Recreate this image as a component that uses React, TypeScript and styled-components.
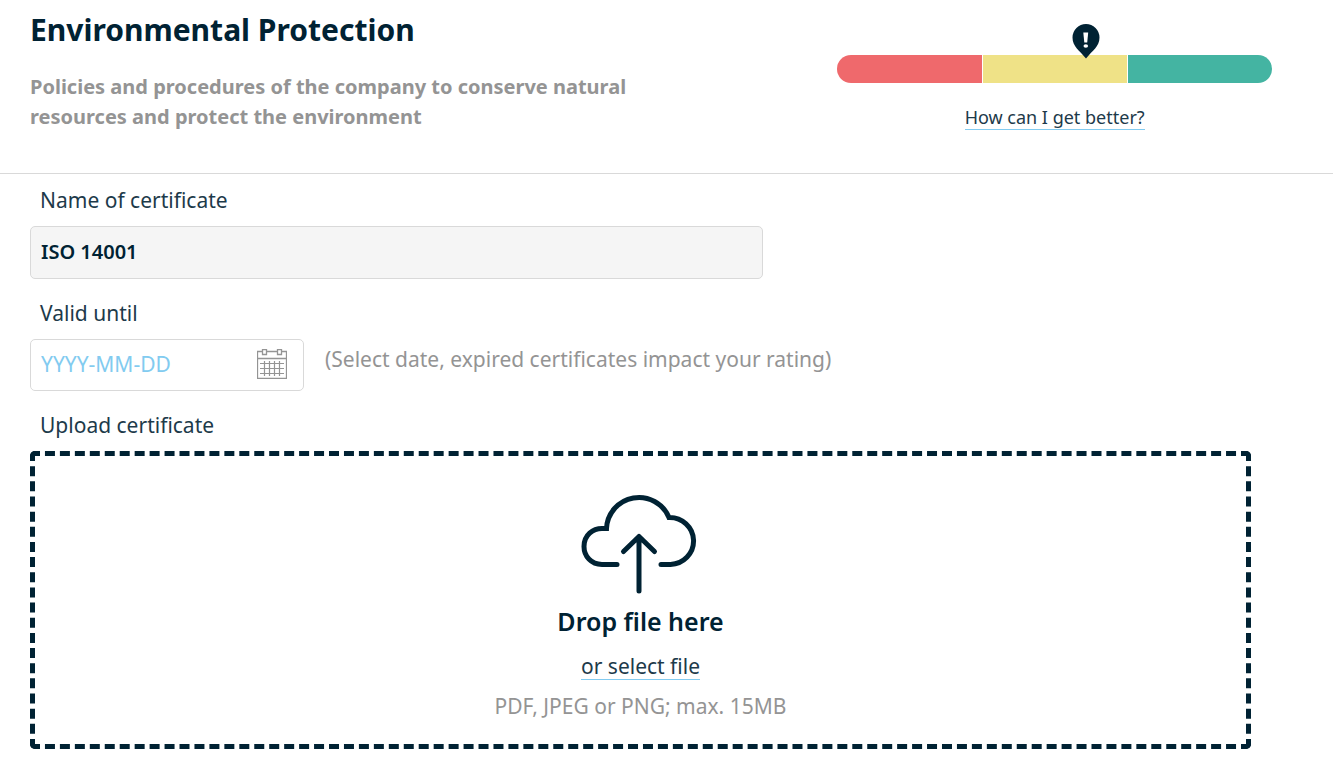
import React from "react";
import styled, { createGlobalStyle } from "styled-components";

const ink = "#002233";
const softInk = "#1d3a4a";
const muted = "#949494";
const sky = "#82cbf0";
const line = "#d9d9d9";

const GlobalStyle = createGlobalStyle`
  *, *::before, *::after { box-sizing: border-box; }
  body {
    margin: 0;
    background: #fff;
    color: ${ink};
    font-family: "Noto Sans", "Open Sans", sans-serif;
    font-size: 21px;
    line-height: 30px;
  }
  input, button { font: inherit; color: inherit; }
`;

const Header = styled.header`
  display: flex;
  justify-content: space-between;
  padding: 10px 61px 41px 30px;
  border-bottom: 1px solid ${line};
`;

const Intro = styled.div`
  width: 50%;
`;

const Title = styled.h1`
  margin: 0 0 22px;
  font-size: 30px;
  line-height: 40px;
  font-weight: 700;
`;

const Summary = styled.p`
  margin: 0;
  color: ${muted};
  font-size: 20px;
  font-weight: 700;
`;

const Rating = styled.div`
  width: 35%;
  padding-top: 45px;
  text-align: center;
`;

const Gauge = styled.div`
  position: relative;
  display: flex;
  gap: 1px;
  height: 28px;
  margin-bottom: 18px;
`;

const Segment = styled.div<{ $color: string }>`
  flex: 1;
  background: ${(p) => p.$color};
  &:first-child { border-radius: 14px 0 0 14px; }
  &:nth-child(3) { border-radius: 0 14px 14px 0; }
`;

const Marker = styled.svg`
  position: absolute;
  bottom: 24px;
  transform: translateX(-50%);
`;

const TextLink = styled.a<{ $size: number; $line: number }>`
  display: inline-block;
  border-bottom: 1px solid ${sky};
  color: ${softInk};
  font-size: ${(p) => p.$size}px;
  line-height: ${(p) => p.$line}px;
  text-decoration: none;
`;

const Form = styled.form`
  padding: 11px 82px 22px 30px;
`;

const Label = styled.label`
  display: block;
  width: fit-content;
  margin: 0 10px 11px;
  color: ${softInk};
`;

const NameInput = styled.input`
  display: block;
  width: 60%;
  height: 53px;
  margin-bottom: 19px;
  padding: 0 10px 2px;
  border: 1px solid ${line};
  border-radius: 5px;
  background: #f5f5f5;
  font-size: 20px;
  font-weight: 600;
`;

const DateRow = styled.div`
  display: flex;
  gap: 21px;
  margin-bottom: 19px;
`;

const DateField = styled.div`
  display: flex;
  align-items: center;
  width: 274px;
  height: 52px;
  padding: 0 16px 2px 10px;
  border: 1px solid ${line};
  border-radius: 5px;
`;

const DateInput = styled.input`
  flex: 1;
  min-width: 0;
  padding: 0;
  border: 0;
  outline: 0;
  background: transparent;
  &::placeholder { color: ${sky}; opacity: 1; }
`;

const IconButton = styled.button`
  display: flex;
  padding: 0;
  border: 0;
  background: none;
  cursor: pointer;
`;

const Hint = styled.p`
  margin: 5px 0 0;
  color: ${muted};
`;

const DropZone = styled.div`
  display: flex;
  flex-direction: column;
  align-items: center;
  padding: 38px 0 23px;
  border: 5px dashed ${ink};
  border-radius: 5px;
`;

const DropTitle = styled.strong`
  margin: 7px 0 12px;
  font-size: 25px;
  line-height: 40px;
  font-weight: 600;
`;

const Formats = styled.p`
  margin: 11px 0 0;
  color: ${muted};
`;

const CalendarIcon = () => (
  <svg width="30" height="30" viewBox="0 0 30 30" fill="none" stroke="#949494" aria-hidden="true">
    <path d="M5 2.5H.5v27h29v-27H25M10 2.5h10M.5 9.5h29" strokeWidth="1.3" />
    <path d="M5.5.5h4v5h-4zM20.5.5h4v5h-4z" strokeWidth="1.3" />
    <path d="M3 14.5h24M3 19.5h24M3 24.5h24M7.5 12v15M12.5 12v15M17.5 12v15M22.5 12v15" strokeWidth="1.2" />
  </svg>
);

const CloudUpload = () => (
  <svg width="120" height="100" viewBox="0 0 120 100" fill="none" stroke={ink} strokeWidth="5" strokeLinecap="round" aria-hidden="true">
    <path d="M36 70.5H21C10 70.5 3 62 3 52.5C3 41 12 34.5 21 34.5H25.5A32.5 32.5 0 0 1 88 23.5A23.8 23.5 0 0 1 89.5 70.5H80" />
    <path d="M58 97V42.5M42.5 57.5L58 42.5L73.5 57.5" strokeLinejoin="round" />
  </svg>
);

export default function App() {
  return (
    <>
      <GlobalStyle />
      <Header>
        <Intro>
          <Title>Environmental Protection</Title>
          <Summary>
            Policies and procedures of the company to conserve natural resources and protect the environment
          </Summary>
        </Intro>
        <Rating>
          <Gauge>
            <Segment $color="#ef696c" />
            <Segment $color="#efe287" />
            <Segment $color="#44b4a2" />
            <Marker width="28" height="36" viewBox="0 0 28 36" style={{ left: "57.2%" }} aria-hidden="true">
              <path d="M14 1a13.5 13.5 0 0 1 13.5 13.5c0 9-7 13-13.5 21C7.5 27.5.5 23.5.5 14.5A13.5 13.5 0 0 1 14 1z" fill={ink} />
              <path d="M11.3 9.5h4.9l-1 10h-2.9z" fill="#fff" />
              <ellipse cx="13.8" cy="23" rx="2.3" ry="1.7" fill="#fff" />
            </Marker>
          </Gauge>
          <TextLink $size={18} $line={24} href="#better">How can I get better?</TextLink>
        </Rating>
      </Header>
      <Form>
        <Label htmlFor="name">Name of certificate</Label>
        <NameInput id="name" defaultValue="ISO 14001" readOnly />
        <Label htmlFor="valid">Valid until</Label>
        <DateRow>
          <DateField>
            <DateInput id="valid" placeholder="YYYY-MM-DD" />
            <IconButton type="button" aria-label="Open calendar">
              <CalendarIcon />
            </IconButton>
          </DateField>
          <Hint>(Select date, expired certificates impact your rating)</Hint>
        </DateRow>
        <Label as="div" id="upload-label">Upload certificate</Label>
        <DropZone role="group" aria-labelledby="upload-label">
          <CloudUpload />
          <DropTitle>Drop file here</DropTitle>
          <TextLink $size={21} $line={26} href="#select">or select file</TextLink>
          <Formats>PDF, JPEG or PNG; max. 15MB</Formats>
        </DropZone>
      </Form>
    </>
  );
}
